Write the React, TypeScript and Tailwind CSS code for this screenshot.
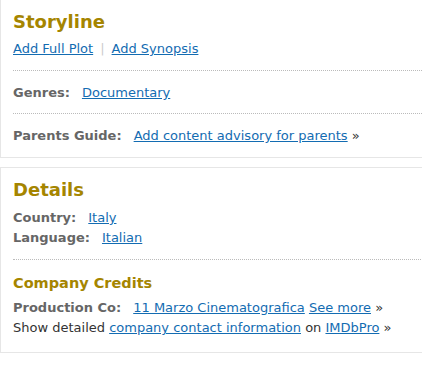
const LINK = 'text-[#136cb2] underline';

function Label({ children }: { children: React.ReactNode }) {
  return <span className="font-bold text-[#666] mr-[12px]">{children}</span>;
}

export default function App() {
  return (
    <div className="w-[422px] h-[366px] overflow-hidden bg-white font-['DejaVu_Sans',Verdana,sans-serif] text-[13px] text-[#333]">
      {/* Storyline panel */}
      <div className="w-[440px] border-l border-b border-[#e6e6e6] px-3 pt-[11px] pb-[13px]">
        <h2 className="text-[18px] font-bold leading-[21px] text-[#a58500]">Storyline</h2>
        <div className="mt-[8px] leading-[17px]">
          <a className={LINK}>Add Full Plot</a>
          <span className="mx-[7px] text-[#ccc]">|</span>
          <a className={LINK}>Add Synopsis</a>
        </div>
        <div className="mt-[13px] border-t border-dotted border-[#bbb]" />
        <div className="mt-[13px] leading-[17px]">
          <Label>Genres:</Label>
          <a className={LINK}>Documentary</a>
        </div>
        <div className="mt-[12px] border-t border-dotted border-[#bbb]" />
        <div className="mt-[13px] leading-[17px]">
          <Label>Parents Guide:</Label>
          <a className={LINK}>Add content advisory for parents</a> »
        </div>
      </div>

      {/* Details panel */}
      <div className="mt-[9px] w-[440px] border border-[#e6e6e6] px-3 pt-[11px] pb-[14px]">
        <h2 className="text-[18px] font-bold leading-[21px] text-[#a58500]">Details</h2>
        <div className="mt-[8px] leading-[20px]">
          <div>
            <Label>Country:</Label>
            <a className={LINK}>Italy</a>
          </div>
          <div>
            <Label>Language:</Label>
            <a className={LINK}>Italian</a>
          </div>
        </div>
        <div className="mt-[11px] border-t border-dotted border-[#bbb]" />
        <h3 className="mt-[14px] text-[14.5px] font-bold leading-[18px] text-[#a58500]">Company Credits</h3>
        <div className="mt-[6px] leading-[20px]">
          <div>
            <Label>Production Co:</Label>
            <a className={LINK}>11 Marzo Cinematografica</a> <a className={LINK}>See more</a> »
          </div>
          <div>
            Show detailed <a className={LINK}>company contact information</a> on{' '}
            <a className={LINK}>IMDbPro</a> »
          </div>
        </div>
      </div>
    </div>
  );
}
